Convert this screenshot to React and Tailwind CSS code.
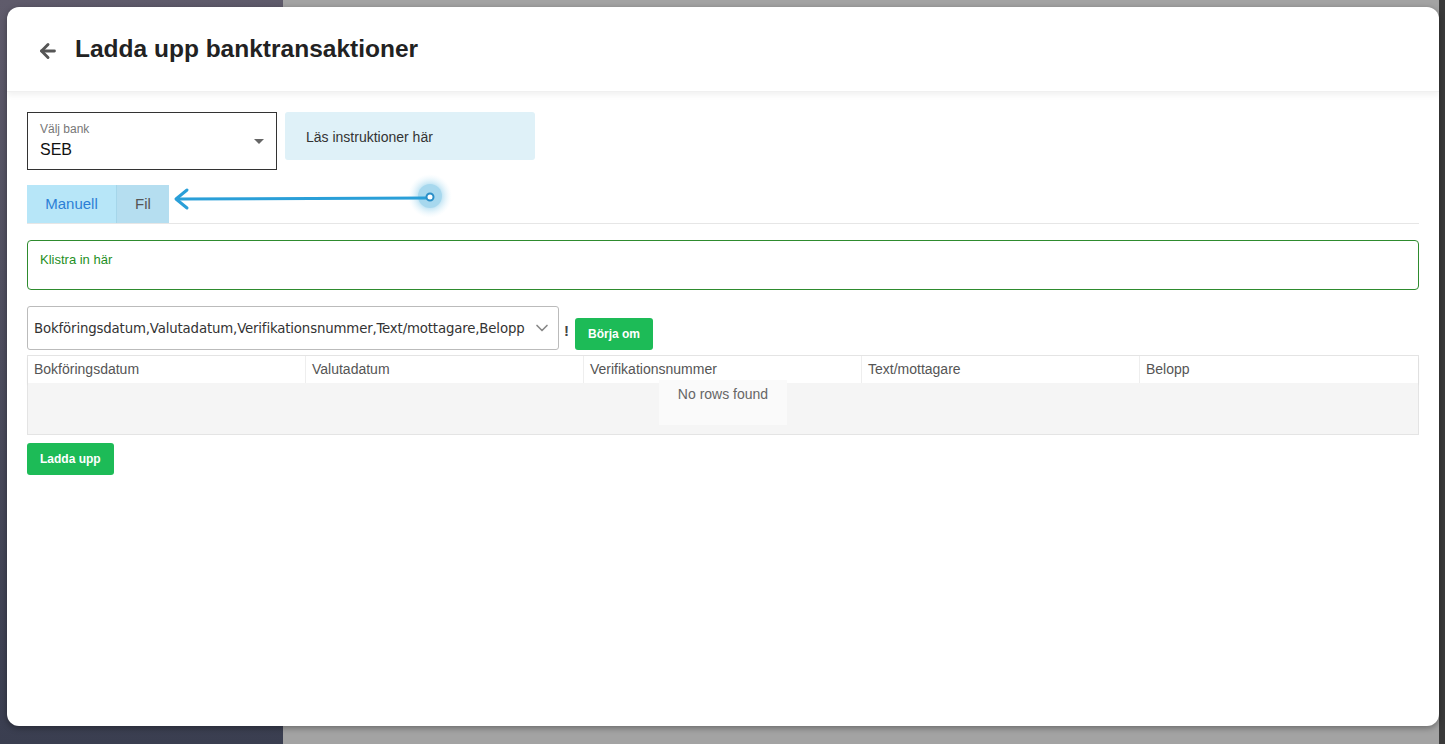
import { ArrowLeft, ChevronDown } from "lucide-react";

const columns = ["Bokföringsdatum", "Valutadatum", "Verifikationsnummer", "Text/mottagare", "Belopp"];

export default function App() {
  return (
    <div className="relative w-[1445px] h-[744px] overflow-hidden bg-[#a3a3a3] [font-family:'Liberation_Sans',Arial,sans-serif]">
      {/* background page behind the modal */}
      <div className="absolute left-0 top-0 h-full w-[283px] bg-gradient-to-b from-[#5f5b6b] to-[#3a3e50]" />
      <div className="absolute right-0 top-0 h-full w-[6px] bg-[#3a3a3a]" />

      {/* modal */}
      <div className="absolute left-[7px] top-[7px] w-[1432px] h-[719px] bg-white rounded-[12px] shadow-[0_2px_6px_rgba(0,0,0,0.35)] flex flex-col overflow-hidden">
        <div className="h-[85px] flex items-center gap-[16px] pl-[30px] shadow-[0_3px_6px_rgba(0,0,0,0.06)] border-b border-[#f0f0f0]">
          <ArrowLeft size={22} strokeWidth={3.2} className="text-[#555] mt-[3px]" />
          <h1 className="text-[24.5px] font-bold text-[#222]">Ladda upp banktransaktioner</h1>
        </div>

        <div className="px-[20px] pt-[20px]">
          <div className="flex gap-[8px]">
            <div className="relative w-[250px] h-[58px] border border-[#333] px-[12px] pt-[9px]">
              <div className="text-[12px] text-[#777] leading-[14px]">Välj bank</div>
              <div className="text-[16px] text-[#111] leading-[20px] mt-[4px]">SEB</div>
              <div className="absolute right-[12px] top-[26px] w-0 h-0 border-l-[5px] border-r-[5px] border-t-[5px] border-l-transparent border-r-transparent border-t-[#666]" />
            </div>
            <div className="w-[250px] h-[48px] bg-[#dff1f8] rounded-[3px] pl-[21px] pt-[15px] text-[14px] text-[#333]">
              Läs instruktioner här
            </div>
          </div>

          <div className="relative mt-[15px] border-b border-[#e6e6e6] flex">
            <div className="h-[38px] w-[90px] bg-[#b7e6f8] flex items-center justify-center text-[15px] text-[#2c7fd6] border-r border-[#a5d6ea]">Manuell</div>
            <div className="h-[38px] w-[52px] bg-[#b5def0] flex items-center justify-center text-[15px] text-[#555]">Fil</div>
            {/* annotation arrow */}
            <svg className="absolute left-[145px] top-[-14px]" width="300" height="56" viewBox="0 0 300 56">
              <defs>
                <radialGradient id="glow">
                  <stop offset="0%" stopColor="#9fd3ea" stopOpacity="0.9" />
                  <stop offset="55%" stopColor="#b8e0f2" stopOpacity="0.8" />
                  <stop offset="100%" stopColor="#e8f6fc" stopOpacity="0" />
                </radialGradient>
              </defs>
              <circle cx="258" cy="25" r="22" fill="url(#glow)" />
              <circle cx="258" cy="25" r="12" fill="#a7d8ee" />
              <line x1="5" y1="28" x2="255" y2="27" stroke="#2a9fd8" strokeWidth="3" strokeLinecap="round" />
              <polyline points="15,19 4,28 15,37" fill="none" stroke="#2a9fd8" strokeWidth="3" strokeLinecap="round" strokeLinejoin="round" />
              <circle cx="258" cy="26" r="3.5" fill="#fff" stroke="#2a8fc8" strokeWidth="2" />
            </svg>
          </div>

          <div className="mt-[16px] h-[50px] border border-[#2e8b2e] rounded-[4px] px-[12px] pt-[9px] text-[13px] text-[#1f8f1f]">
            Klistra in här
          </div>

          <div className="mt-[16px] flex items-start">
            <div className="w-[532px] h-[44px] border border-[#bbb] rounded-[3px] flex items-center justify-between pl-[6px] pr-[6px]">
              <span className="text-[14.8px] text-[#333] [font-family:'DejaVu_Sans_Condensed',sans-serif] tracking-[-0.15px] whitespace-nowrap">
                Bokföringsdatum,Valutadatum,Verifikationsnummer,Text/mottagare,Belopp
              </span>
              <ChevronDown size={20} strokeWidth={2} className="text-[#888] shrink-0" />
            </div>
            <span className="ml-[5px] mt-[14px] text-[15px] font-bold text-[#444]">!</span>
            <button className="ml-[6px] mt-[12px] h-[32px] px-[13px] bg-[#1dbb57] rounded-[3px] text-white text-[12px] font-bold">
              Börja om
            </button>
          </div>

          <div className="relative mt-[5px] border border-[#e4e4e4]">
            <div className="grid grid-cols-5 h-[27px] bg-white shadow-[0_2px_3px_rgba(0,0,0,0.05)]">
              {columns.map((c, i) => (
                <div key={c} className={`flex items-center pl-[6px] text-[14px] text-[#555] ${i < 4 ? "border-r border-[#eee]" : ""}`}>
                  {c}
                </div>
              ))}
            </div>
            <div className="h-[51px] bg-[#f5f5f5]" />
            <div className="absolute left-[631px] top-[24px] w-[128px] h-[45px] bg-[#fafafa] flex justify-center pt-[4px] text-[14px] text-[#666]">
              No rows found
            </div>
          </div>

          <button className="mt-[8px] h-[32px] px-[13px] bg-[#1dbb57] rounded-[3px] text-white text-[12px] font-bold">
            Ladda upp
          </button>
        </div>
      </div>
    </div>
  );
}
